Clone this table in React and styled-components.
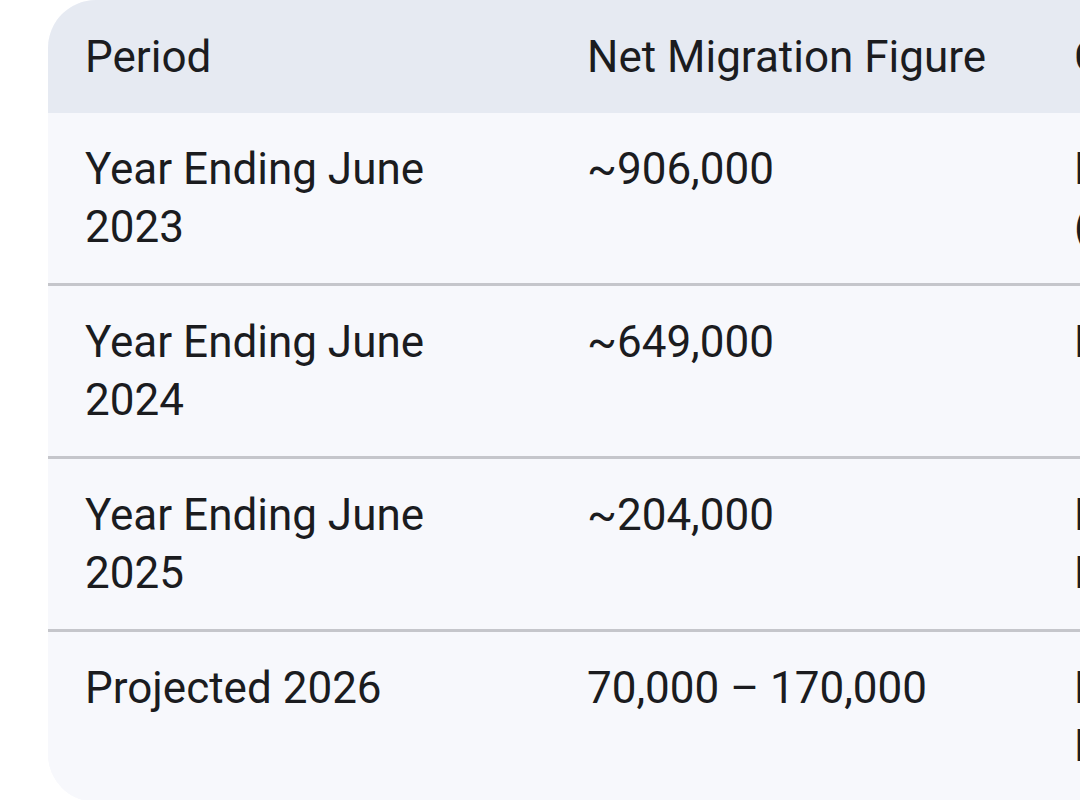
import React from "react";
import styled, { createGlobalStyle } from "styled-components";

const Global = createGlobalStyle`
  html, body {
    margin: 0;
    padding: 0;
    background: #ffffff;
    overflow: hidden;
    font-family: Roboto, "Noto Sans", sans-serif;
  }
`;

const Page = styled.div`
  padding-left: 48px;
  width: 1600px;
`;

const Card = styled.div`
  width: 1520px;
  border-radius: 48px;
  overflow: hidden;
  background: #f7f8fc;
`;

const Table = styled.table`
  border-collapse: collapse;
  table-layout: fixed;
  width: 100%;
  color: #1b1c1f;
  font-size: 44px;
  line-height: 58px;
`;

const HeadRow = styled.tr`
  background: #e6eaf2;
`;

const HeadCell = styled.th`
  text-align: left;
  font-weight: 400;
  padding: 28px 38px 27px 37px;
  white-space: nowrap;
  vertical-align: top;
`;

const Row = styled.tr`
  background: #f7f8fc;
  border-top: ${(p) => (p.$first ? "none" : "3px solid #c5c6cb")};
`;

const Cell = styled.td`
  padding: 27px 38px 27px 37px;
  vertical-align: top;
`;

const rows = [
  {
    period: ["Year Ending June", "2023"],
    figure: "~906,000",
    context: ["Record peak", "(post-pandemic surge)"],
  },
  {
    period: ["Year Ending June", "2024"],
    figure: "~649,000",
    context: ["Decline begins"],
  },
  {
    period: ["Year Ending June", "2025"],
    figure: "~204,000",
    context: ["Rapid fall after", "Home Office visa rules"],
  },
  {
    period: ["Projected 2026"],
    figure: "70,000 – 170,000",
    context: ["Return toward", "Long-term average"],
  },
];

const Lines = ({ lines }) =>
  lines.map((l, i) => (
    <React.Fragment key={i}>
      {i > 0 && <br />}
      {l}
    </React.Fragment>
  ));

export default function App() {
  return (
    <>
      <Global />
      <Page>
        <Card>
          <Table>
            <colgroup>
              <col style={{ width: 502 }} />
              <col style={{ width: 487 }} />
              <col />
            </colgroup>
            <thead>
              <HeadRow>
                <HeadCell>Period</HeadCell>
                <HeadCell>Net Migration Figure</HeadCell>
                <HeadCell>Context</HeadCell>
              </HeadRow>
            </thead>
            <tbody>
              {rows.map((r, i) => (
                <Row key={i} $first={i === 0}>
                  <Cell>
                    <Lines lines={r.period} />
                  </Cell>
                  <Cell>{r.figure}</Cell>
                  <Cell>
                    <Lines lines={r.context} />
                  </Cell>
                </Row>
              ))}
            </tbody>
          </Table>
        </Card>
      </Page>
    </>
  );
}
